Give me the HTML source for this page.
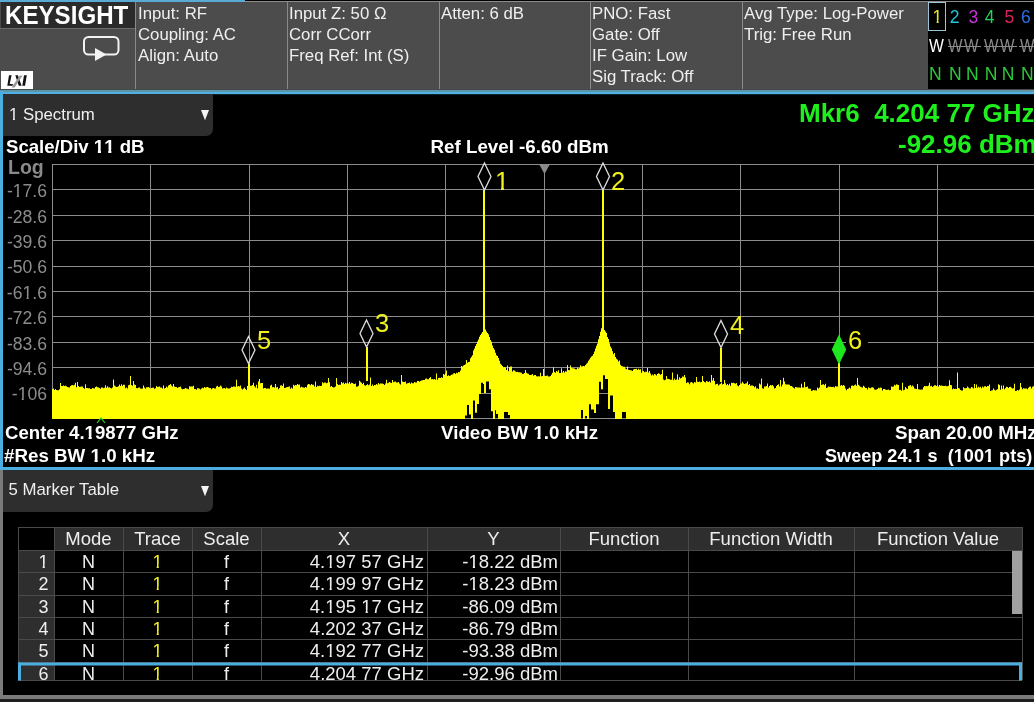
<!DOCTYPE html>
<html><head><meta charset="utf-8">
<style>
*{margin:0;padding:0;box-sizing:border-box}
html,body{width:1034px;height:702px;overflow:hidden;background:#000;font-family:"Liberation Sans",sans-serif}
.abs{position:absolute;white-space:pre}
.hd{color:#efefef;font-size:16.8px;line-height:21px}
#root{position:absolute;left:0;top:0;width:1034px;height:702px;will-change:transform}
.b{font-weight:bold}
.o{display:inline-block;line-height:1.117em;height:1.117em;margin:-0.5em 0;clip-path:polygon(0 0,100% 0,100% 0.70em,0.35em 0.70em,0.35em 100%,0.235em 100%,0.235em 0.70em,0 0.70em)}
.ob{display:inline-block;line-height:1.117em;height:1.117em;margin:-0.5em 0;clip-path:polygon(0 0,100% 0,100% 0.70em,0.385em 0.70em,0.385em 100%,0.215em 100%,0.215em 0.70em,0 0.70em)}
</style></head><body><div id="root">
<div class="abs" style="left:0;top:1px;width:1034px;height:89px;background:#4c4c4c;border-top:1px solid #8c8c8c"></div>
<div class="abs" style="left:0;top:0;width:245px;height:1.7px;background:#5aaad4"></div>
<div class="abs" style="left:1px;top:2px;width:134px;height:26px;background:#2b2b2b"></div>
<div class="abs" style="left:0;top:28px;width:135px;height:1px;background:#6a6a6a"></div>
<div class="abs b" style="left:5px;top:0px;font-size:25px;line-height:30px;color:#fff;transform:scaleX(0.965);transform-origin:0 0">KEYSIGHT</div>
<svg class="abs" style="left:80px;top:33px" width="42" height="32">
 <rect x="4" y="4" width="34.5" height="17.5" rx="4.5" ry="4.5" fill="none" stroke="#f2f2f2" stroke-width="2"/>
 <path d="M15 15 L26.5 21.5 L15 28 Z" fill="#f2f2f2"/>
</svg>
<div class="abs" style="left:1px;top:71px;width:32px;height:19px;background:#fff"></div>
<svg class="abs" style="left:0;top:70px" width="36" height="22"><path d="M9 5.2 L11.6 5.2 L9.7 14 L12.9 14 L12.6 15.8 L7.3 15.8 Z" fill="#111"/><path d="M15.3 5.2 L17.9 5.2 L21.6 15.7 L18.8 15.7 Z" fill="#111"/><path d="M19.8 5.5 L22.6 5.5 L14.6 17.6 L11.5 17.6 Z" fill="#999"/><path d="M24 5.2 L26.8 5.2 L25 15.7 L22.3 15.7 Z" fill="#111"/></svg>
<div class="abs" style="left:135px;top:1px;width:1px;height:89px;background:#8a8a8a"></div>
<div class="abs" style="left:287px;top:1px;width:1px;height:89px;background:#8a8a8a"></div>
<div class="abs" style="left:439px;top:1px;width:1px;height:89px;background:#8a8a8a"></div>
<div class="abs" style="left:590px;top:1px;width:1px;height:89px;background:#8a8a8a"></div>
<div class="abs" style="left:742px;top:1px;width:1px;height:89px;background:#8a8a8a"></div>
<div class="abs hd" style="left:138px;top:3px">Input: RF
Coupling: AC
Align: Auto</div>
<div class="abs hd" style="left:289px;top:3px">Input Z: 50 Ω
Corr CCorr
Freq Ref: Int (S)</div>
<div class="abs hd" style="left:441px;top:3px">Atten: 6 dB</div>
<div class="abs hd" style="left:592px;top:3px">PNO: Fast
Gate: Off
IF Gain: Low
Sig Track: Off</div>
<div class="abs hd" style="left:744px;top:3px">Avg Type: Log-Power
Trig: Free Run</div>
<div class="abs" style="left:928px;top:2px;width:106px;height:88px;background:#000"></div>
<div class="abs" style="left:928px;top:2px;width:18px;height:29px;border:1px solid #9cc4d8"></div>
<div class="abs" style="left:932.5px;top:5px;font-size:17.5px;line-height:24px;color:#e8e82a"><span class="o">1</span></div>
<div class="abs" style="left:949.8px;top:5px;font-size:17.5px;line-height:24px;color:#1cc8d8">2</div>
<div class="abs" style="left:968.5px;top:5px;font-size:17.5px;line-height:24px;color:#c832d8">3</div>
<div class="abs" style="left:984.8px;top:5px;font-size:17.5px;line-height:24px;color:#22d45a">4</div>
<div class="abs" style="left:1004.4px;top:5px;font-size:17.5px;line-height:24px;color:#d8245a">5</div>
<div class="abs" style="left:1021px;top:5px;font-size:17.5px;line-height:24px;color:#2a6ee0">6</div>
<div class="abs" style="left:929px;top:34px;font-size:17.5px;line-height:24px;color:#fff;transform:scaleX(0.9);transform-origin:0 0">W</div>
<div class="abs" style="left:948px;top:34px;font-size:17.5px;line-height:24px;color:#8a8a8a;transform:scaleX(0.88);transform-origin:0 0">W</div>
<div class="abs" style="left:963.5px;top:34px;font-size:17.5px;line-height:24px;color:#8a8a8a;transform:scaleX(0.88);transform-origin:0 0">W</div>
<div class="abs" style="left:984px;top:34px;font-size:17.5px;line-height:24px;color:#8a8a8a;transform:scaleX(0.88);transform-origin:0 0">W</div>
<div class="abs" style="left:1000px;top:34px;font-size:17.5px;line-height:24px;color:#8a8a8a;transform:scaleX(0.88);transform-origin:0 0">W</div>
<div class="abs" style="left:1020px;top:34px;font-size:17.5px;line-height:24px;color:#8a8a8a;transform:scaleX(0.88);transform-origin:0 0">W</div>
<div class="abs" style="left:947.5px;top:46px;width:33.5px;height:1px;background:#8a8a8a"></div>
<div class="abs" style="left:983.5px;top:46px;width:33.5px;height:1px;background:#8a8a8a"></div>
<div class="abs" style="left:1019px;top:46px;width:15px;height:1px;background:#8a8a8a"></div>
<div class="abs" style="left:929px;top:62px;font-size:17.5px;line-height:24px;color:#2ec83c">N</div>
<div class="abs" style="left:949px;top:62px;font-size:17.5px;line-height:24px;color:#2ec83c">N</div>
<div class="abs" style="left:966px;top:62px;font-size:17.5px;line-height:24px;color:#2ec83c">N</div>
<div class="abs" style="left:984.7px;top:62px;font-size:17.5px;line-height:24px;color:#2ec83c">N</div>
<div class="abs" style="left:1001.8px;top:62px;font-size:17.5px;line-height:24px;color:#2ec83c">N</div>
<div class="abs" style="left:1021px;top:62px;font-size:17.5px;line-height:24px;color:#2ec83c">N</div>
<div class="abs" style="left:0;top:89px;width:1034px;height:6px;background:linear-gradient(to bottom,#434a4e 0px,#434a4e 1px,#5e96a8 1px,#5e96a8 2.6px,#50b0e4 2.6px,#50b0e4 4.8px,#0c2630 4.8px,#0c2630 6px)"></div>
<div class="abs" style="left:0;top:91px;width:3px;height:379px;background:#4aaee0"></div>
<div class="abs" style="left:0;top:467px;width:1034px;height:3px;background:#4aaee0"></div>
<div class="abs" style="left:3px;top:94px;width:210px;height:41.6px;background:#2e2e2e;border-bottom-right-radius:7px"></div>
<div class="abs" style="left:9px;top:104.5px;font-size:16.8px;line-height:20px;color:#efefef"><span class="o">1</span> Spectrum</div>
<svg class="abs" style="left:200px;top:109px" width="10" height="12"><path d="M1 1 L9 1 L5 11.2 Z" fill="#f4f4f4"/></svg>
<div class="abs b" style="left:6px;top:136px;font-size:18.6px;line-height:22px;color:#fff">Scale/Div <span class="ob">1</span><span class="ob">1</span> dB</div>
<div class="abs b" style="left:430.5px;top:136px;font-size:18.75px;line-height:22px;color:#fff">Ref Level -6.60 dBm</div>
<div class="abs b" style="left:799px;top:98px;font-size:26px;line-height:30px;color:#1ef01e">Mkr6  4.204 77 GHz</div>
<div class="abs b" style="left:898px;top:129px;font-size:26px;line-height:30px;color:#1ef01e">-92.96 dBm</div>
<div class="abs b" style="left:8px;top:156px;font-size:19.5px;line-height:22px;color:#8a8a8a">Log</div>
<div class="abs" style="right:987px;top:180.2px;font-size:17.6px;line-height:22px;color:#8c8c8c">-<span class="o">1</span>7.6</div>
<div class="abs" style="right:987px;top:205.6px;font-size:17.6px;line-height:22px;color:#8c8c8c">-28.6</div>
<div class="abs" style="right:987px;top:231.0px;font-size:17.6px;line-height:22px;color:#8c8c8c">-39.6</div>
<div class="abs" style="right:987px;top:256.4px;font-size:17.6px;line-height:22px;color:#8c8c8c">-50.6</div>
<div class="abs" style="right:987px;top:281.8px;font-size:17.6px;line-height:22px;color:#8c8c8c">-6<span class="o">1</span>.6</div>
<div class="abs" style="right:987px;top:307.2px;font-size:17.6px;line-height:22px;color:#8c8c8c">-72.6</div>
<div class="abs" style="right:987px;top:332.6px;font-size:17.6px;line-height:22px;color:#8c8c8c">-83.6</div>
<div class="abs" style="right:987px;top:358.0px;font-size:17.6px;line-height:22px;color:#8c8c8c">-94.6</div>
<div class="abs" style="right:987px;top:383.4px;font-size:17.6px;line-height:22px;color:#8c8c8c">-<span class="o">1</span>06</div>
<svg class="abs" style="left:0;top:0" width="1034" height="702"><rect x="52" y="164" width="1" height="255" fill="#8c8c8c"/><rect x="150" y="164" width="1" height="255" fill="#8c8c8c"/><rect x="249" y="164" width="1" height="255" fill="#8c8c8c"/><rect x="347" y="164" width="1" height="255" fill="#8c8c8c"/><rect x="445" y="164" width="1" height="255" fill="#8c8c8c"/><rect x="544" y="164" width="1" height="255" fill="#8c8c8c"/><rect x="642" y="164" width="1" height="255" fill="#8c8c8c"/><rect x="740" y="164" width="1" height="255" fill="#8c8c8c"/><rect x="839" y="164" width="1" height="255" fill="#8c8c8c"/><rect x="937" y="164" width="1" height="255" fill="#8c8c8c"/><rect x="52" y="164" width="982" height="1" fill="#8c8c8c"/><rect x="52" y="189" width="982" height="1" fill="#8c8c8c"/><rect x="52" y="215" width="982" height="1" fill="#8c8c8c"/><rect x="52" y="240" width="982" height="1" fill="#8c8c8c"/><rect x="52" y="266" width="982" height="1" fill="#8c8c8c"/><rect x="52" y="291" width="982" height="1" fill="#8c8c8c"/><rect x="52" y="316" width="982" height="1" fill="#8c8c8c"/><rect x="52" y="342" width="982" height="1" fill="#8c8c8c"/><rect x="52" y="367" width="982" height="1" fill="#8c8c8c"/><rect x="52" y="393" width="982" height="1" fill="#8c8c8c"/><rect x="52" y="418" width="982" height="1" fill="#8c8c8c"/><path d="M539.5 165 L549.5 165 L544.5 174 Z" fill="#8a8a8a"/><path d="M52 388.9 L52 388.9 L53 388.9 L53 388.6 L54 388.6 L54 390.1 L55 390.1 L55 388.9 L56 388.9 L56 389.9 L57 389.9 L57 390.2 L58 390.2 L58 390.3 L59 390.3 L59 389.2 L60 389.2 L60 383.0 L61 383.0 L61 386.1 L62 386.1 L62 386.1 L63 386.1 L63 385.4 L64 385.4 L64 386.1 L65 386.1 L65 385.8 L66 385.8 L66 386.3 L67 386.3 L67 386.9 L68 386.9 L68 387.3 L69 387.3 L69 387.6 L70 387.6 L70 385.9 L71 385.9 L71 385.3 L72 385.3 L72 384.9 L73 384.9 L73 385.4 L74 385.4 L74 384.8 L75 384.8 L75 382.8 L76 382.8 L76 387.3 L77 387.3 L77 382.0 L78 382.0 L78 386.1 L79 386.1 L79 387.1 L80 387.1 L80 386.7 L81 386.7 L81 386.4 L82 386.4 L82 386.4 L83 386.4 L83 388.0 L84 388.0 L84 388.8 L85 388.8 L85 384.3 L86 384.3 L86 387.9 L87 387.9 L87 388.0 L88 388.0 L88 388.3 L89 388.3 L89 388.3 L90 388.3 L90 389.0 L91 389.0 L91 388.9 L92 388.9 L92 388.0 L93 388.0 L93 388.3 L94 388.3 L94 388.5 L95 388.5 L95 387.1 L96 387.1 L96 386.6 L97 386.6 L97 387.2 L98 387.2 L98 387.6 L99 387.6 L99 387.9 L100 387.9 L100 388.7 L101 388.7 L101 387.4 L102 387.4 L102 387.5 L103 387.5 L103 388.2 L104 388.2 L104 387.8 L105 387.8 L105 385.3 L106 385.3 L106 387.8 L107 387.8 L107 386.2 L108 386.2 L108 387.4 L109 387.4 L109 387.2 L110 387.2 L110 387.9 L111 387.9 L111 388.5 L112 388.5 L112 387.5 L113 387.5 L113 379.4 L114 379.4 L114 385.4 L115 385.4 L115 386.5 L116 386.5 L116 387.0 L117 387.0 L117 386.7 L118 386.7 L118 386.3 L119 386.3 L119 384.6 L120 384.6 L120 385.9 L121 385.9 L121 384.2 L122 384.2 L122 385.7 L123 385.7 L123 384.7 L124 384.7 L124 384.7 L125 384.7 L125 388.3 L126 388.3 L126 387.6 L127 387.6 L127 388.4 L128 388.4 L128 385.2 L129 385.2 L129 384.8 L130 384.8 L130 376.0 L131 376.0 L131 384.9 L132 384.9 L132 385.7 L133 385.7 L133 381.0 L134 381.0 L134 384.6 L135 384.6 L135 384.9 L136 384.9 L136 387.9 L137 387.9 L137 388.3 L138 388.3 L138 387.6 L139 387.6 L139 387.5 L140 387.5 L140 388.4 L141 388.4 L141 388.7 L142 388.7 L142 388.6 L143 388.6 L143 385.4 L144 385.4 L144 387.5 L145 387.5 L145 388.7 L146 388.7 L146 387.2 L147 387.2 L147 387.3 L148 387.3 L148 386.9 L149 386.9 L149 387.8 L150 387.8 L150 388.6 L151 388.6 L151 387.9 L152 387.9 L152 387.7 L153 387.7 L153 387.6 L154 387.6 L154 388.8 L155 388.8 L155 388.3 L156 388.3 L156 386.1 L157 386.1 L157 386.9 L158 386.9 L158 386.7 L159 386.7 L159 386.5 L160 386.5 L160 387.5 L161 387.5 L161 387.6 L162 387.6 L162 388.5 L163 388.5 L163 385.4 L164 385.4 L164 388.5 L165 388.5 L165 388.0 L166 388.0 L166 386.5 L167 386.5 L167 387.5 L168 387.5 L168 385.4 L169 385.4 L169 385.0 L170 385.0 L170 384.1 L171 384.1 L171 385.5 L172 385.5 L172 386.4 L173 386.4 L173 384.1 L174 384.1 L174 386.5 L175 386.5 L175 386.9 L176 386.9 L176 386.9 L177 386.9 L177 387.9 L178 387.9 L178 387.3 L179 387.3 L179 387.0 L180 387.0 L180 386.6 L181 386.6 L181 388.6 L182 388.6 L182 389.2 L183 389.2 L183 389.1 L184 389.1 L184 388.8 L185 388.8 L185 388.0 L186 388.0 L186 388.4 L187 388.4 L187 388.7 L188 388.7 L188 389.2 L189 389.2 L189 386.2 L190 386.2 L190 386.4 L191 386.4 L191 386.5 L192 386.5 L192 386.5 L193 386.5 L193 385.7 L194 385.7 L194 389.1 L195 389.1 L195 388.9 L196 388.9 L196 389.7 L197 389.7 L197 388.2 L198 388.2 L198 388.2 L199 388.2 L199 388.8 L200 388.8 L200 389.4 L201 389.4 L201 388.4 L202 388.4 L202 387.7 L203 387.7 L203 388.2 L204 388.2 L204 387.0 L205 387.0 L205 387.8 L206 387.8 L206 387.2 L207 387.2 L207 387.0 L208 387.0 L208 387.5 L209 387.5 L209 388.1 L210 388.1 L210 388.0 L211 388.0 L211 389.3 L212 389.3 L212 388.3 L213 388.3 L213 388.1 L214 388.1 L214 388.6 L215 388.6 L215 388.4 L216 388.4 L216 386.4 L217 386.4 L217 385.8 L218 385.8 L218 387.1 L219 387.1 L219 386.8 L220 386.8 L220 385.6 L221 385.6 L221 386.5 L222 386.5 L222 388.5 L223 388.5 L223 388.3 L224 388.3 L224 388.1 L225 388.1 L225 388.8 L226 388.8 L226 387.5 L227 387.5 L227 388.3 L228 388.3 L228 388.5 L229 388.5 L229 388.5 L230 388.5 L230 388.0 L231 388.0 L231 386.8 L232 386.8 L232 387.0 L233 387.0 L233 386.4 L234 386.4 L234 386.5 L235 386.5 L235 386.8 L236 386.8 L236 379.7 L237 379.7 L237 386.6 L238 386.6 L238 386.1 L239 386.1 L239 386.5 L240 386.5 L240 385.4 L241 385.4 L241 388.4 L242 388.4 L242 389.6 L243 389.6 L243 388.4 L244 388.4 L244 387.4 L245 387.4 L245 389.0 L246 389.0 L246 389.9 L247 389.9 L247 386.0 L248 386.0 L248 386.0 L249 386.0 L249 385.3 L250 385.3 L250 385.8 L251 385.8 L251 385.8 L252 385.8 L252 385.1 L253 385.1 L253 382.8 L254 382.8 L254 386.3 L255 386.3 L255 387.5 L256 387.5 L256 384.7 L257 384.7 L257 388.3 L258 388.3 L258 381.4 L259 381.4 L259 378.9 L260 378.9 L260 383.3 L261 383.3 L261 383.1 L262 383.1 L262 383.0 L263 383.0 L263 388.6 L264 388.6 L264 388.1 L265 388.1 L265 387.9 L266 387.9 L266 388.8 L267 388.8 L267 388.6 L268 388.6 L268 388.4 L269 388.4 L269 388.8 L270 388.8 L270 385.6 L271 385.6 L271 384.8 L272 384.8 L272 387.2 L273 387.2 L273 387.0 L274 387.0 L274 387.6 L275 387.6 L275 384.1 L276 384.1 L276 387.6 L277 387.6 L277 387.0 L278 387.0 L278 389.3 L279 389.3 L279 388.1 L280 388.1 L280 385.5 L281 385.5 L281 385.3 L282 385.3 L282 385.9 L283 385.9 L283 383.6 L284 383.6 L284 388.1 L285 388.1 L285 387.7 L286 387.7 L286 387.3 L287 387.3 L287 387.0 L288 387.0 L288 386.7 L289 386.7 L289 386.4 L290 386.4 L290 388.8 L291 388.8 L291 387.5 L292 387.5 L292 388.6 L293 388.6 L293 384.7 L294 384.7 L294 385.7 L295 385.7 L295 385.0 L296 385.0 L296 385.3 L297 385.3 L297 383.9 L298 383.9 L298 384.7 L299 384.7 L299 384.4 L300 384.4 L300 387.6 L301 387.6 L301 386.7 L302 386.7 L302 387.2 L303 387.2 L303 387.6 L304 387.6 L304 387.8 L305 387.8 L305 387.0 L306 387.0 L306 387.6 L307 387.6 L307 384.8 L308 384.8 L308 384.0 L309 384.0 L309 384.2 L310 384.2 L310 385.2 L311 385.2 L311 384.0 L312 384.0 L312 384.7 L313 384.7 L313 384.7 L314 384.7 L314 386.6 L315 386.6 L315 381.5 L316 381.5 L316 387.0 L317 387.0 L317 385.8 L318 385.8 L318 386.3 L319 386.3 L319 385.7 L320 385.7 L320 385.9 L321 385.9 L321 385.7 L322 385.7 L322 382.3 L323 382.3 L323 383.3 L324 383.3 L324 382.4 L325 382.4 L325 382.5 L326 382.5 L326 383.3 L327 383.3 L327 382.7 L328 382.7 L328 378.0 L329 378.0 L329 382.2 L330 382.2 L330 386.8 L331 386.8 L331 385.9 L332 385.9 L332 387.0 L333 387.0 L333 387.4 L334 387.4 L334 387.2 L335 387.2 L335 386.6 L336 386.6 L336 377.9 L337 377.9 L337 384.0 L338 384.0 L338 385.1 L339 385.1 L339 384.7 L340 384.7 L340 384.8 L341 384.8 L341 382.0 L342 382.0 L342 383.3 L343 383.3 L343 382.6 L344 382.6 L344 384.1 L345 384.1 L345 382.8 L346 382.8 L346 383.5 L347 383.5 L347 382.7 L348 382.7 L348 383.6 L349 383.6 L349 382.1 L350 382.1 L350 383.7 L351 383.7 L351 382.7 L352 382.7 L352 383.1 L353 383.1 L353 383.7 L354 383.7 L354 384.0 L355 384.0 L355 383.4 L356 383.4 L356 386.7 L357 386.7 L357 386.4 L358 386.4 L358 385.8 L359 385.8 L359 380.7 L360 380.7 L360 381.8 L361 381.8 L361 382.8 L362 382.8 L362 383.9 L363 383.9 L363 382.7 L364 382.7 L364 385.3 L365 385.3 L365 385.7 L366 385.7 L366 385.1 L367 385.1 L367 384.2 L368 384.2 L368 385.2 L369 385.2 L369 384.5 L370 384.5 L370 377.5 L371 377.5 L371 385.9 L372 385.9 L372 384.6 L373 384.6 L373 385.9 L374 385.9 L374 385.1 L375 385.1 L375 385.1 L376 385.1 L376 384.1 L377 384.1 L377 384.8 L378 384.8 L378 383.0 L379 383.0 L379 384.2 L380 384.2 L380 383.4 L381 383.4 L381 383.5 L382 383.5 L382 383.6 L383 383.6 L383 383.9 L384 383.9 L384 385.0 L385 385.0 L385 383.6 L386 383.6 L386 379.7 L387 379.7 L387 383.2 L388 383.2 L388 382.7 L389 382.7 L389 382.1 L390 382.1 L390 382.5 L391 382.5 L391 383.1 L392 383.1 L392 380.0 L393 380.0 L393 382.3 L394 382.3 L394 381.8 L395 381.8 L395 381.4 L396 381.4 L396 382.5 L397 382.5 L397 382.4 L398 382.4 L398 382.0 L399 382.0 L399 383.4 L400 383.4 L400 384.5 L401 384.5 L401 375.0 L402 375.0 L402 381.5 L403 381.5 L403 381.9 L404 381.9 L404 382.1 L405 382.1 L405 381.4 L406 381.4 L406 383.7 L407 383.7 L407 383.3 L408 383.3 L408 383.0 L409 383.0 L409 382.5 L410 382.5 L410 383.7 L411 383.7 L411 382.5 L412 382.5 L412 383.3 L413 383.3 L413 383.3 L414 383.3 L414 381.9 L415 381.9 L415 382.5 L416 382.5 L416 382.6 L417 382.6 L417 381.1 L418 381.1 L418 381.0 L419 381.0 L419 381.7 L420 381.7 L420 381.1 L421 381.1 L421 380.5 L422 380.5 L422 380.3 L423 380.3 L423 380.1 L424 380.1 L424 380.0 L425 380.0 L425 378.8 L426 378.8 L426 378.5 L427 378.5 L427 379.2 L428 379.2 L428 379.2 L429 379.2 L429 378.1 L430 378.1 L430 377.1 L431 377.1 L431 379.2 L432 379.2 L432 379.0 L433 379.0 L433 379.6 L434 379.6 L434 379.1 L435 379.1 L435 379.7 L436 379.7 L436 373.6 L437 373.6 L437 379.8 L438 379.8 L438 377.9 L439 377.9 L439 377.8 L440 377.8 L440 378.1 L441 378.1 L441 377.3 L442 377.3 L442 377.7 L443 377.7 L443 374.1 L444 374.1 L444 374.8 L445 374.8 L445 373.2 L446 373.2 L446 370.4 L447 370.4 L447 376.1 L448 376.1 L448 375.3 L449 375.3 L449 375.9 L450 375.9 L450 375.4 L451 375.4 L451 374.7 L452 374.7 L452 374.5 L453 374.5 L453 373.4 L454 373.4 L454 372.9 L455 372.9 L455 373.9 L456 373.9 L456 372.7 L457 372.7 L457 373.2 L458 373.2 L458 371.9 L459 371.9 L459 372.3 L460 372.3 L460 370.6 L461 370.6 L461 366.0 L462 366.0 L462 366.6 L463 366.6 L463 365.4 L464 365.4 L464 365.0 L465 365.0 L465 364.3 L466 364.3 L466 360.1 L467 360.1 L467 362.8 L468 362.8 L468 362.0 L469 362.0 L469 361.7 L470 361.7 L470 358.2 L471 358.2 L471 356.7 L472 356.7 L472 355.2 L473 355.2 L473 350.5 L474 350.5 L474 348.4 L475 348.4 L475 345.9 L476 345.9 L476 343.9 L477 343.9 L477 341.4 L478 341.4 L478 339.6 L479 339.6 L479 336.7 L480 336.7 L480 335.0 L481 335.0 L481 333.4 L482 333.4 L482 332.1 L483 332.1 L483 331.0 L484 331.0 L484 330.7 L485 330.7 L485 329.5 L486 329.5 L486 331.4 L487 331.4 L487 332.9 L488 332.9 L488 334.2 L489 334.2 L489 336.9 L490 336.9 L490 339.9 L491 339.9 L491 341.8 L492 341.8 L492 345.4 L493 345.4 L493 347.9 L494 347.9 L494 349.8 L495 349.8 L495 352.8 L496 352.8 L496 355.3 L497 355.3 L497 355.9 L498 355.9 L498 358.1 L499 358.1 L499 360.7 L500 360.7 L500 363.7 L501 363.7 L501 364.8 L502 364.8 L502 365.9 L503 365.9 L503 367.3 L504 367.3 L504 367.0 L505 367.0 L505 367.4 L506 367.4 L506 369.9 L507 369.9 L507 365.5 L508 365.5 L508 371.3 L509 371.3 L509 367.0 L510 367.0 L510 366.4 L511 366.4 L511 366.6 L512 366.6 L512 371.6 L513 371.6 L513 370.3 L514 370.3 L514 370.6 L515 370.6 L515 371.4 L516 371.4 L516 372.1 L517 372.1 L517 371.8 L518 371.8 L518 372.2 L519 372.2 L519 372.2 L520 372.2 L520 372.5 L521 372.5 L521 372.8 L522 372.8 L522 373.9 L523 373.9 L523 373.7 L524 373.7 L524 373.1 L525 373.1 L525 370.1 L526 370.1 L526 372.7 L527 372.7 L527 373.6 L528 373.6 L528 373.7 L529 373.7 L529 375.1 L530 375.1 L530 374.9 L531 374.9 L531 374.8 L532 374.8 L532 373.9 L533 373.9 L533 375.8 L534 375.8 L534 375.1 L535 375.1 L535 375.0 L536 375.0 L536 376.2 L537 376.2 L537 376.6 L538 376.6 L538 376.2 L539 376.2 L539 376.5 L540 376.5 L540 372.7 L541 372.7 L541 376.3 L542 376.3 L542 375.9 L543 375.9 L543 368.9 L544 368.9 L544 375.8 L545 375.8 L545 376.0 L546 376.0 L546 375.8 L547 375.8 L547 375.5 L548 375.5 L548 376.4 L549 376.4 L549 376.6 L550 376.6 L550 376.1 L551 376.1 L551 374.6 L552 374.6 L552 372.7 L553 372.7 L553 367.3 L554 367.3 L554 371.9 L555 371.9 L555 372.8 L556 372.8 L556 370.9 L557 370.9 L557 371.8 L558 371.8 L558 370.3 L559 370.3 L559 372.9 L560 372.9 L560 373.1 L561 373.1 L561 368.3 L562 368.3 L562 372.5 L563 372.5 L563 370.9 L564 370.9 L564 372.6 L565 372.6 L565 371.3 L566 371.3 L566 371.6 L567 371.6 L567 364.9 L568 364.9 L568 370.1 L569 370.1 L569 370.2 L570 370.2 L570 365.4 L571 365.4 L571 368.0 L572 368.0 L572 368.2 L573 368.2 L573 368.2 L574 368.2 L574 368.4 L575 368.4 L575 369.3 L576 369.3 L576 369.3 L577 369.3 L577 367.7 L578 367.7 L578 368.5 L579 368.5 L579 368.1 L580 368.1 L580 365.3 L581 365.3 L581 366.6 L582 366.6 L582 366.2 L583 366.2 L583 366.0 L584 366.0 L584 366.2 L585 366.2 L585 365.1 L586 365.1 L586 363.7 L587 363.7 L587 362.7 L588 362.7 L588 360.8 L589 360.8 L589 359.5 L590 359.5 L590 357.7 L591 357.7 L591 356.4 L592 356.4 L592 355.7 L593 355.7 L593 354.0 L594 354.0 L594 351.5 L595 351.5 L595 348.4 L596 348.4 L596 345.8 L597 345.8 L597 343.4 L598 343.4 L598 339.3 L599 339.3 L599 336.1 L600 336.1 L600 331.7 L601 331.7 L601 328.2 L602 328.2 L602 330.0 L603 330.0 L603 329.9 L604 329.9 L604 330.0 L605 330.0 L605 331.5 L606 331.5 L606 333.0 L607 333.0 L607 336.9 L608 336.9 L608 338.9 L609 338.9 L609 343.2 L610 343.2 L610 346.5 L611 346.5 L611 348.2 L612 348.2 L612 351.2 L613 351.2 L613 354.2 L614 354.2 L614 353.1 L615 353.1 L615 357.0 L616 357.0 L616 358.8 L617 358.8 L617 359.8 L618 359.8 L618 361.5 L619 361.5 L619 360.5 L620 360.5 L620 364.7 L621 364.7 L621 365.9 L622 365.9 L622 366.2 L623 366.2 L623 366.7 L624 366.7 L624 366.8 L625 366.8 L625 368.4 L626 368.4 L626 369.2 L627 369.2 L627 366.6 L628 366.6 L628 369.8 L629 369.8 L629 370.1 L630 370.1 L630 370.2 L631 370.2 L631 370.4 L632 370.4 L632 371.0 L633 371.0 L633 369.5 L634 369.5 L634 369.0 L635 369.0 L635 369.0 L636 369.0 L636 368.8 L637 368.8 L637 370.1 L638 370.1 L638 368.8 L639 368.8 L639 369.7 L640 369.7 L640 369.3 L641 369.3 L641 372.8 L642 372.8 L642 371.3 L643 371.3 L643 371.1 L644 371.1 L644 372.3 L645 372.3 L645 371.8 L646 371.8 L646 371.8 L647 371.8 L647 368.0 L648 368.0 L648 372.4 L649 372.4 L649 370.9 L650 370.9 L650 373.6 L651 373.6 L651 375.5 L652 375.5 L652 374.4 L653 374.4 L653 375.4 L654 375.4 L654 373.9 L655 373.9 L655 374.4 L656 374.4 L656 375.5 L657 375.5 L657 373.9 L658 373.9 L658 373.2 L659 373.2 L659 373.7 L660 373.7 L660 374.8 L661 374.8 L661 374.1 L662 374.1 L662 369.8 L663 369.8 L663 379.4 L664 379.4 L664 380.2 L665 380.2 L665 379.7 L666 379.7 L666 376.0 L667 376.0 L667 378.8 L668 378.8 L668 379.1 L669 379.1 L669 379.3 L670 379.3 L670 379.8 L671 379.8 L671 379.7 L672 379.7 L672 372.4 L673 372.4 L673 380.3 L674 380.3 L674 378.5 L675 378.5 L675 379.9 L676 379.9 L676 379.6 L677 379.6 L677 374.2 L678 374.2 L678 379.8 L679 379.8 L679 377.3 L680 377.3 L680 378.4 L681 378.4 L681 377.9 L682 377.9 L682 376.4 L683 376.4 L683 376.8 L684 376.8 L684 375.1 L685 375.1 L685 377.6 L686 377.6 L686 382.9 L687 382.9 L687 382.2 L688 382.2 L688 382.6 L689 382.6 L689 384.2 L690 384.2 L690 382.5 L691 382.5 L691 382.1 L692 382.1 L692 382.8 L693 382.8 L693 383.5 L694 383.5 L694 382.1 L695 382.1 L695 382.4 L696 382.4 L696 376.9 L697 376.9 L697 381.8 L698 381.8 L698 382.1 L699 382.1 L699 381.4 L700 381.4 L700 382.2 L701 382.2 L701 382.0 L702 382.0 L702 376.0 L703 376.0 L703 381.1 L704 381.1 L704 382.1 L705 382.1 L705 382.6 L706 382.6 L706 381.1 L707 381.1 L707 381.6 L708 381.6 L708 381.9 L709 381.9 L709 381.2 L710 381.2 L710 382.4 L711 382.4 L711 375.0 L712 375.0 L712 380.6 L713 380.6 L713 378.0 L714 378.0 L714 381.1 L715 381.1 L715 384.4 L716 384.4 L716 384.0 L717 384.0 L717 383.7 L718 383.7 L718 385.4 L719 385.4 L719 384.4 L720 384.4 L720 383.8 L721 383.8 L721 382.4 L722 382.4 L722 384.6 L723 384.6 L723 384.1 L724 384.1 L724 380.0 L725 380.0 L725 383.3 L726 383.3 L726 385.0 L727 385.0 L727 384.1 L728 384.1 L728 385.2 L729 385.2 L729 383.7 L730 383.7 L730 385.8 L731 385.8 L731 382.8 L732 382.8 L732 383.1 L733 383.1 L733 382.8 L734 382.8 L734 383.3 L735 383.3 L735 383.8 L736 383.8 L736 383.1 L737 383.1 L737 385.5 L738 385.5 L738 386.3 L739 386.3 L739 385.0 L740 385.0 L740 383.5 L741 383.5 L741 383.6 L742 383.6 L742 381.7 L743 381.7 L743 383.2 L744 383.2 L744 384.0 L745 384.0 L745 383.5 L746 383.5 L746 383.3 L747 383.3 L747 381.4 L748 381.4 L748 385.0 L749 385.0 L749 384.1 L750 384.1 L750 385.8 L751 385.8 L751 385.6 L752 385.6 L752 385.4 L753 385.4 L753 385.9 L754 385.9 L754 387.2 L755 387.2 L755 386.3 L756 386.3 L756 388.5 L757 388.5 L757 388.3 L758 388.3 L758 388.9 L759 388.9 L759 383.6 L760 383.6 L760 384.5 L761 384.5 L761 378.6 L762 378.6 L762 388.2 L763 388.2 L763 388.7 L764 388.7 L764 386.5 L765 386.5 L765 386.4 L766 386.4 L766 386.1 L767 386.1 L767 383.6 L768 383.6 L768 387.6 L769 387.6 L769 386.0 L770 386.0 L770 385.0 L771 385.0 L771 385.5 L772 385.5 L772 385.1 L773 385.1 L773 386.3 L774 386.3 L774 388.4 L775 388.4 L775 387.9 L776 387.9 L776 385.9 L777 385.9 L777 385.1 L778 385.1 L778 384.3 L779 384.3 L779 386.5 L780 386.5 L780 379.9 L781 379.9 L781 386.4 L782 386.4 L782 384.6 L783 384.6 L783 377.8 L784 377.8 L784 381.4 L785 381.4 L785 384.2 L786 384.2 L786 384.4 L787 384.4 L787 384.6 L788 384.6 L788 384.4 L789 384.4 L789 384.7 L790 384.7 L790 385.9 L791 385.9 L791 386.0 L792 386.0 L792 386.8 L793 386.8 L793 387.8 L794 387.8 L794 388.5 L795 388.5 L795 387.0 L796 387.0 L796 387.3 L797 387.3 L797 387.5 L798 387.5 L798 387.6 L799 387.6 L799 387.4 L800 387.4 L800 387.8 L801 387.8 L801 383.7 L802 383.7 L802 387.4 L803 387.4 L803 387.6 L804 387.6 L804 381.9 L805 381.9 L805 387.2 L806 387.2 L806 387.0 L807 387.0 L807 386.5 L808 386.5 L808 388.4 L809 388.4 L809 388.8 L810 388.8 L810 388.8 L811 388.8 L811 390.9 L812 390.9 L812 390.5 L813 390.5 L813 389.9 L814 389.9 L814 390.3 L815 390.3 L815 390.3 L816 390.3 L816 390.6 L817 390.6 L817 387.5 L818 387.5 L818 388.4 L819 388.4 L819 387.5 L820 387.5 L820 380.0 L821 380.0 L821 385.1 L822 385.1 L822 384.4 L823 384.4 L823 384.3 L824 384.3 L824 385.3 L825 385.3 L825 383.8 L826 383.8 L826 388.1 L827 388.1 L827 387.5 L828 387.5 L828 386.5 L829 386.5 L829 386.7 L830 386.7 L830 386.8 L831 386.8 L831 386.9 L832 386.9 L832 387.1 L833 387.1 L833 386.8 L834 386.8 L834 387.4 L835 387.4 L835 385.9 L836 385.9 L836 386.4 L837 386.4 L837 386.4 L838 386.4 L838 386.4 L839 386.4 L839 386.4 L840 386.4 L840 385.7 L841 385.7 L841 384.9 L842 384.9 L842 385.8 L843 385.8 L843 384.9 L844 384.9 L844 385.7 L845 385.7 L845 388.4 L846 388.4 L846 390.2 L847 390.2 L847 388.9 L848 388.9 L848 388.5 L849 388.5 L849 387.6 L850 387.6 L850 388.5 L851 388.5 L851 385.8 L852 385.8 L852 385.4 L853 385.4 L853 386.0 L854 386.0 L854 385.3 L855 385.3 L855 384.4 L856 384.4 L856 385.8 L857 385.8 L857 378.0 L858 378.0 L858 384.8 L859 384.8 L859 385.8 L860 385.8 L860 386.8 L861 386.8 L861 387.2 L862 387.2 L862 387.4 L863 387.4 L863 385.8 L864 385.8 L864 386.7 L865 386.7 L865 387.9 L866 387.9 L866 388.1 L867 388.1 L867 389.4 L868 389.4 L868 387.2 L869 387.2 L869 388.1 L870 388.1 L870 388.3 L871 388.3 L871 387.6 L872 387.6 L872 387.3 L873 387.3 L873 387.7 L874 387.7 L874 389.4 L875 389.4 L875 389.7 L876 389.7 L876 389.4 L877 389.4 L877 389.1 L878 389.1 L878 387.7 L879 387.7 L879 388.3 L880 388.3 L880 387.4 L881 387.4 L881 387.9 L882 387.9 L882 390.5 L883 390.5 L883 389.0 L884 389.0 L884 389.1 L885 389.1 L885 389.6 L886 389.6 L886 390.1 L887 390.1 L887 389.7 L888 389.7 L888 389.6 L889 389.6 L889 390.2 L890 390.2 L890 389.9 L891 389.9 L891 386.6 L892 386.6 L892 386.7 L893 386.7 L893 386.4 L894 386.4 L894 384.7 L895 384.7 L895 385.6 L896 385.6 L896 384.3 L897 384.3 L897 384.8 L898 384.8 L898 385.1 L899 385.1 L899 390.1 L900 390.1 L900 389.7 L901 389.7 L901 390.8 L902 390.8 L902 382.7 L903 382.7 L903 390.3 L904 390.3 L904 389.8 L905 389.8 L905 387.1 L906 387.1 L906 388.3 L907 388.3 L907 389.1 L908 389.1 L908 386.1 L909 386.1 L909 385.4 L910 385.4 L910 384.9 L911 384.9 L911 386.6 L912 386.6 L912 385.5 L913 385.5 L913 386.4 L914 386.4 L914 388.5 L915 388.5 L915 388.7 L916 388.7 L916 389.1 L917 389.1 L917 384.0 L918 384.0 L918 389.2 L919 389.2 L919 389.5 L920 389.5 L920 389.7 L921 389.7 L921 389.6 L922 389.6 L922 389.4 L923 389.4 L923 387.2 L924 387.2 L924 386.1 L925 386.1 L925 386.2 L926 386.2 L926 386.0 L927 386.0 L927 386.3 L928 386.3 L928 385.5 L929 385.5 L929 382.8 L930 382.8 L930 386.3 L931 386.3 L931 385.8 L932 385.8 L932 387.0 L933 387.0 L933 386.2 L934 386.2 L934 385.3 L935 385.3 L935 385.3 L936 385.3 L936 386.1 L937 386.1 L937 385.2 L938 385.2 L938 386.4 L939 386.4 L939 385.0 L940 385.0 L940 385.7 L941 385.7 L941 385.4 L942 385.4 L942 385.8 L943 385.8 L943 386.1 L944 386.1 L944 385.9 L945 385.9 L945 385.8 L946 385.8 L946 386.3 L947 386.3 L947 386.3 L948 386.3 L948 385.8 L949 385.8 L949 380.2 L950 380.2 L950 384.9 L951 384.9 L951 385.2 L952 385.2 L952 389.3 L953 389.3 L953 388.6 L954 388.6 L954 389.0 L955 389.0 L955 388.7 L956 388.7 L956 388.9 L957 388.9 L957 372.5 L958 372.5 L958 388.0 L959 388.0 L959 388.4 L960 388.4 L960 390.1 L961 390.1 L961 390.6 L962 390.6 L962 390.6 L963 390.6 L963 387.2 L964 387.2 L964 388.3 L965 388.3 L965 388.2 L966 388.2 L966 388.0 L967 388.0 L967 386.6 L968 386.6 L968 387.6 L969 387.6 L969 388.6 L970 388.6 L970 388.6 L971 388.6 L971 387.1 L972 387.1 L972 387.6 L973 387.6 L973 388.5 L974 388.5 L974 384.0 L975 384.0 L975 388.0 L976 388.0 L976 384.5 L977 384.5 L977 387.7 L978 387.7 L978 386.8 L979 386.8 L979 387.6 L980 387.6 L980 386.7 L981 386.7 L981 388.3 L982 388.3 L982 386.5 L983 386.5 L983 387.5 L984 387.5 L984 386.3 L985 386.3 L985 386.3 L986 386.3 L986 387.0 L987 387.0 L987 386.1 L988 386.1 L988 386.0 L989 386.0 L989 384.5 L990 384.5 L990 391.0 L991 391.0 L991 390.5 L992 390.5 L992 390.3 L993 390.3 L993 388.4 L994 388.4 L994 389.8 L995 389.8 L995 390.5 L996 390.5 L996 389.8 L997 389.8 L997 389.2 L998 389.2 L998 384.2 L999 384.2 L999 385.0 L1000 385.0 L1000 389.8 L1001 389.8 L1001 385.5 L1002 385.5 L1002 388.8 L1003 388.8 L1003 385.5 L1004 385.5 L1004 389.3 L1005 389.3 L1005 387.9 L1006 387.9 L1006 386.7 L1007 386.7 L1007 386.9 L1008 386.9 L1008 388.0 L1009 388.0 L1009 387.1 L1010 387.1 L1010 386.7 L1011 386.7 L1011 387.8 L1012 387.8 L1012 388.4 L1013 388.4 L1013 388.2 L1014 388.2 L1014 383.7 L1015 383.7 L1015 391.1 L1016 391.1 L1016 390.8 L1017 390.8 L1017 390.1 L1018 390.1 L1018 390.6 L1019 390.6 L1019 389.5 L1020 389.5 L1020 383.1 L1021 383.1 L1021 387.3 L1022 387.3 L1022 389.3 L1023 389.3 L1023 388.2 L1024 388.2 L1024 388.4 L1025 388.4 L1025 388.6 L1026 388.6 L1026 388.6 L1027 388.6 L1027 389.3 L1028 389.3 L1028 387.8 L1029 387.8 L1029 386.8 L1030 386.8 L1030 386.6 L1031 386.6 L1031 388.5 L1032 388.5 L1032 386.7 L1033 386.7 L1033 386.2 L1034 386.2 L1034 419.0 L1033 419.0 L1033 419.0 L1032 419.0 L1032 419.0 L1031 419.0 L1031 419.0 L1030 419.0 L1030 419.0 L1029 419.0 L1029 419.0 L1028 419.0 L1028 419.0 L1027 419.0 L1027 419.0 L1026 419.0 L1026 419.0 L1025 419.0 L1025 419.0 L1024 419.0 L1024 419.0 L1023 419.0 L1023 419.0 L1022 419.0 L1022 419.0 L1021 419.0 L1021 419.0 L1020 419.0 L1020 419.0 L1019 419.0 L1019 419.0 L1018 419.0 L1018 419.0 L1017 419.0 L1017 419.0 L1016 419.0 L1016 419.0 L1015 419.0 L1015 419.0 L1014 419.0 L1014 419.0 L1013 419.0 L1013 419.0 L1012 419.0 L1012 419.0 L1011 419.0 L1011 419.0 L1010 419.0 L1010 419.0 L1009 419.0 L1009 419.0 L1008 419.0 L1008 419.0 L1007 419.0 L1007 419.0 L1006 419.0 L1006 419.0 L1005 419.0 L1005 419.0 L1004 419.0 L1004 419.0 L1003 419.0 L1003 419.0 L1002 419.0 L1002 419.0 L1001 419.0 L1001 419.0 L1000 419.0 L1000 419.0 L999 419.0 L999 419.0 L998 419.0 L998 419.0 L997 419.0 L997 419.0 L996 419.0 L996 419.0 L995 419.0 L995 419.0 L994 419.0 L994 419.0 L993 419.0 L993 419.0 L992 419.0 L992 419.0 L991 419.0 L991 419.0 L990 419.0 L990 419.0 L989 419.0 L989 419.0 L988 419.0 L988 419.0 L987 419.0 L987 419.0 L986 419.0 L986 419.0 L985 419.0 L985 419.0 L984 419.0 L984 419.0 L983 419.0 L983 419.0 L982 419.0 L982 419.0 L981 419.0 L981 419.0 L980 419.0 L980 419.0 L979 419.0 L979 419.0 L978 419.0 L978 419.0 L977 419.0 L977 419.0 L976 419.0 L976 419.0 L975 419.0 L975 419.0 L974 419.0 L974 419.0 L973 419.0 L973 419.0 L972 419.0 L972 419.0 L971 419.0 L971 419.0 L970 419.0 L970 419.0 L969 419.0 L969 419.0 L968 419.0 L968 419.0 L967 419.0 L967 419.0 L966 419.0 L966 419.0 L965 419.0 L965 419.0 L964 419.0 L964 419.0 L963 419.0 L963 419.0 L962 419.0 L962 419.0 L961 419.0 L961 419.0 L960 419.0 L960 419.0 L959 419.0 L959 419.0 L958 419.0 L958 419.0 L957 419.0 L957 419.0 L956 419.0 L956 419.0 L955 419.0 L955 419.0 L954 419.0 L954 419.0 L953 419.0 L953 419.0 L952 419.0 L952 419.0 L951 419.0 L951 419.0 L950 419.0 L950 419.0 L949 419.0 L949 419.0 L948 419.0 L948 419.0 L947 419.0 L947 419.0 L946 419.0 L946 419.0 L945 419.0 L945 419.0 L944 419.0 L944 419.0 L943 419.0 L943 419.0 L942 419.0 L942 419.0 L941 419.0 L941 419.0 L940 419.0 L940 419.0 L939 419.0 L939 419.0 L938 419.0 L938 419.0 L937 419.0 L937 419.0 L936 419.0 L936 419.0 L935 419.0 L935 419.0 L934 419.0 L934 419.0 L933 419.0 L933 419.0 L932 419.0 L932 419.0 L931 419.0 L931 419.0 L930 419.0 L930 419.0 L929 419.0 L929 419.0 L928 419.0 L928 419.0 L927 419.0 L927 419.0 L926 419.0 L926 419.0 L925 419.0 L925 419.0 L924 419.0 L924 419.0 L923 419.0 L923 419.0 L922 419.0 L922 419.0 L921 419.0 L921 419.0 L920 419.0 L920 419.0 L919 419.0 L919 419.0 L918 419.0 L918 419.0 L917 419.0 L917 419.0 L916 419.0 L916 419.0 L915 419.0 L915 419.0 L914 419.0 L914 419.0 L913 419.0 L913 419.0 L912 419.0 L912 419.0 L911 419.0 L911 419.0 L910 419.0 L910 419.0 L909 419.0 L909 419.0 L908 419.0 L908 419.0 L907 419.0 L907 419.0 L906 419.0 L906 419.0 L905 419.0 L905 419.0 L904 419.0 L904 419.0 L903 419.0 L903 419.0 L902 419.0 L902 419.0 L901 419.0 L901 419.0 L900 419.0 L900 419.0 L899 419.0 L899 419.0 L898 419.0 L898 419.0 L897 419.0 L897 419.0 L896 419.0 L896 419.0 L895 419.0 L895 419.0 L894 419.0 L894 419.0 L893 419.0 L893 419.0 L892 419.0 L892 419.0 L891 419.0 L891 419.0 L890 419.0 L890 419.0 L889 419.0 L889 419.0 L888 419.0 L888 419.0 L887 419.0 L887 419.0 L886 419.0 L886 419.0 L885 419.0 L885 419.0 L884 419.0 L884 419.0 L883 419.0 L883 419.0 L882 419.0 L882 419.0 L881 419.0 L881 419.0 L880 419.0 L880 419.0 L879 419.0 L879 419.0 L878 419.0 L878 419.0 L877 419.0 L877 419.0 L876 419.0 L876 419.0 L875 419.0 L875 419.0 L874 419.0 L874 419.0 L873 419.0 L873 419.0 L872 419.0 L872 419.0 L871 419.0 L871 419.0 L870 419.0 L870 419.0 L869 419.0 L869 419.0 L868 419.0 L868 419.0 L867 419.0 L867 419.0 L866 419.0 L866 419.0 L865 419.0 L865 419.0 L864 419.0 L864 419.0 L863 419.0 L863 419.0 L862 419.0 L862 419.0 L861 419.0 L861 419.0 L860 419.0 L860 419.0 L859 419.0 L859 419.0 L858 419.0 L858 419.0 L857 419.0 L857 419.0 L856 419.0 L856 419.0 L855 419.0 L855 419.0 L854 419.0 L854 419.0 L853 419.0 L853 419.0 L852 419.0 L852 419.0 L851 419.0 L851 419.0 L850 419.0 L850 419.0 L849 419.0 L849 419.0 L848 419.0 L848 419.0 L847 419.0 L847 419.0 L846 419.0 L846 419.0 L845 419.0 L845 419.0 L844 419.0 L844 419.0 L843 419.0 L843 419.0 L842 419.0 L842 419.0 L841 419.0 L841 419.0 L840 419.0 L840 419.0 L839 419.0 L839 419.0 L838 419.0 L838 419.0 L837 419.0 L837 419.0 L836 419.0 L836 419.0 L835 419.0 L835 419.0 L834 419.0 L834 419.0 L833 419.0 L833 419.0 L832 419.0 L832 419.0 L831 419.0 L831 419.0 L830 419.0 L830 419.0 L829 419.0 L829 419.0 L828 419.0 L828 419.0 L827 419.0 L827 419.0 L826 419.0 L826 419.0 L825 419.0 L825 419.0 L824 419.0 L824 419.0 L823 419.0 L823 419.0 L822 419.0 L822 419.0 L821 419.0 L821 419.0 L820 419.0 L820 419.0 L819 419.0 L819 419.0 L818 419.0 L818 419.0 L817 419.0 L817 419.0 L816 419.0 L816 419.0 L815 419.0 L815 419.0 L814 419.0 L814 419.0 L813 419.0 L813 419.0 L812 419.0 L812 419.0 L811 419.0 L811 419.0 L810 419.0 L810 419.0 L809 419.0 L809 419.0 L808 419.0 L808 419.0 L807 419.0 L807 419.0 L806 419.0 L806 419.0 L805 419.0 L805 419.0 L804 419.0 L804 419.0 L803 419.0 L803 419.0 L802 419.0 L802 419.0 L801 419.0 L801 419.0 L800 419.0 L800 419.0 L799 419.0 L799 419.0 L798 419.0 L798 419.0 L797 419.0 L797 419.0 L796 419.0 L796 419.0 L795 419.0 L795 419.0 L794 419.0 L794 419.0 L793 419.0 L793 419.0 L792 419.0 L792 419.0 L791 419.0 L791 419.0 L790 419.0 L790 419.0 L789 419.0 L789 419.0 L788 419.0 L788 419.0 L787 419.0 L787 419.0 L786 419.0 L786 419.0 L785 419.0 L785 419.0 L784 419.0 L784 419.0 L783 419.0 L783 419.0 L782 419.0 L782 419.0 L781 419.0 L781 419.0 L780 419.0 L780 419.0 L779 419.0 L779 419.0 L778 419.0 L778 419.0 L777 419.0 L777 419.0 L776 419.0 L776 419.0 L775 419.0 L775 419.0 L774 419.0 L774 419.0 L773 419.0 L773 419.0 L772 419.0 L772 419.0 L771 419.0 L771 419.0 L770 419.0 L770 419.0 L769 419.0 L769 419.0 L768 419.0 L768 419.0 L767 419.0 L767 419.0 L766 419.0 L766 419.0 L765 419.0 L765 419.0 L764 419.0 L764 419.0 L763 419.0 L763 419.0 L762 419.0 L762 419.0 L761 419.0 L761 419.0 L760 419.0 L760 419.0 L759 419.0 L759 419.0 L758 419.0 L758 419.0 L757 419.0 L757 419.0 L756 419.0 L756 419.0 L755 419.0 L755 419.0 L754 419.0 L754 419.0 L753 419.0 L753 419.0 L752 419.0 L752 419.0 L751 419.0 L751 419.0 L750 419.0 L750 419.0 L749 419.0 L749 419.0 L748 419.0 L748 419.0 L747 419.0 L747 419.0 L746 419.0 L746 419.0 L745 419.0 L745 419.0 L744 419.0 L744 419.0 L743 419.0 L743 419.0 L742 419.0 L742 419.0 L741 419.0 L741 419.0 L740 419.0 L740 419.0 L739 419.0 L739 419.0 L738 419.0 L738 419.0 L737 419.0 L737 419.0 L736 419.0 L736 419.0 L735 419.0 L735 419.0 L734 419.0 L734 419.0 L733 419.0 L733 419.0 L732 419.0 L732 419.0 L731 419.0 L731 419.0 L730 419.0 L730 419.0 L729 419.0 L729 419.0 L728 419.0 L728 419.0 L727 419.0 L727 419.0 L726 419.0 L726 419.0 L725 419.0 L725 419.0 L724 419.0 L724 419.0 L723 419.0 L723 419.0 L722 419.0 L722 419.0 L721 419.0 L721 419.0 L720 419.0 L720 419.0 L719 419.0 L719 419.0 L718 419.0 L718 419.0 L717 419.0 L717 419.0 L716 419.0 L716 419.0 L715 419.0 L715 419.0 L714 419.0 L714 419.0 L713 419.0 L713 419.0 L712 419.0 L712 419.0 L711 419.0 L711 419.0 L710 419.0 L710 419.0 L709 419.0 L709 419.0 L708 419.0 L708 419.0 L707 419.0 L707 419.0 L706 419.0 L706 419.0 L705 419.0 L705 419.0 L704 419.0 L704 419.0 L703 419.0 L703 419.0 L702 419.0 L702 419.0 L701 419.0 L701 419.0 L700 419.0 L700 419.0 L699 419.0 L699 419.0 L698 419.0 L698 419.0 L697 419.0 L697 419.0 L696 419.0 L696 419.0 L695 419.0 L695 419.0 L694 419.0 L694 419.0 L693 419.0 L693 419.0 L692 419.0 L692 419.0 L691 419.0 L691 419.0 L690 419.0 L690 419.0 L689 419.0 L689 419.0 L688 419.0 L688 419.0 L687 419.0 L687 419.0 L686 419.0 L686 419.0 L685 419.0 L685 419.0 L684 419.0 L684 419.0 L683 419.0 L683 419.0 L682 419.0 L682 419.0 L681 419.0 L681 419.0 L680 419.0 L680 419.0 L679 419.0 L679 419.0 L678 419.0 L678 419.0 L677 419.0 L677 419.0 L676 419.0 L676 419.0 L675 419.0 L675 419.0 L674 419.0 L674 419.0 L673 419.0 L673 419.0 L672 419.0 L672 419.0 L671 419.0 L671 419.0 L670 419.0 L670 419.0 L669 419.0 L669 419.0 L668 419.0 L668 419.0 L667 419.0 L667 419.0 L666 419.0 L666 419.0 L665 419.0 L665 419.0 L664 419.0 L664 419.0 L663 419.0 L663 419.0 L662 419.0 L662 419.0 L661 419.0 L661 419.0 L660 419.0 L660 419.0 L659 419.0 L659 419.0 L658 419.0 L658 419.0 L657 419.0 L657 419.0 L656 419.0 L656 419.0 L655 419.0 L655 419.0 L654 419.0 L654 419.0 L653 419.0 L653 419.0 L652 419.0 L652 419.0 L651 419.0 L651 419.0 L650 419.0 L650 419.0 L649 419.0 L649 419.0 L648 419.0 L648 419.0 L647 419.0 L647 419.0 L646 419.0 L646 419.0 L645 419.0 L645 419.0 L644 419.0 L644 419.0 L643 419.0 L643 419.0 L642 419.0 L642 419.0 L641 419.0 L641 419.0 L640 419.0 L640 419.0 L639 419.0 L639 419.0 L638 419.0 L638 419.0 L637 419.0 L637 419.0 L636 419.0 L636 419.0 L635 419.0 L635 419.0 L634 419.0 L634 419.0 L633 419.0 L633 419.0 L632 419.0 L632 419.0 L631 419.0 L631 419.0 L630 419.0 L630 419.0 L629 419.0 L629 419.0 L628 419.0 L628 419.0 L627 419.0 L627 419.0 L626 419.0 L626 412.0 L625 412.0 L625 412.0 L624 412.0 L624 412.0 L623 412.0 L623 412.0 L622 412.0 L622 419.0 L621 419.0 L621 419.0 L620 419.0 L620 419.0 L619 419.0 L619 419.0 L618 419.0 L618 419.0 L617 419.0 L617 419.0 L616 419.0 L616 419.0 L615 419.0 L615 412.0 L614 412.0 L614 412.0 L613 412.0 L613 395.5 L612 395.5 L612 395.5 L611 395.5 L611 395.5 L610 395.5 L610 408.9 L609 408.9 L609 408.9 L608 408.9 L608 379.0 L607 379.0 L607 379.0 L606 379.0 L606 379.0 L605 379.0 L605 375.2 L604 375.2 L604 375.2 L603 375.2 L603 389.3 L602 389.3 L602 389.3 L601 389.3 L601 381.8 L600 381.8 L600 381.8 L599 381.8 L599 404.2 L598 404.2 L598 404.2 L597 404.2 L597 404.2 L596 404.2 L596 413.0 L595 413.0 L595 413.0 L594 413.0 L594 409.6 L593 409.6 L593 409.6 L592 409.6 L592 409.6 L591 409.6 L591 404.2 L590 404.2 L590 404.2 L589 404.2 L589 419.0 L588 419.0 L588 419.0 L587 419.0 L587 416.0 L586 416.0 L586 416.0 L585 416.0 L585 419.0 L584 419.0 L584 419.0 L583 419.0 L583 410.0 L582 410.0 L582 410.0 L581 410.0 L581 419.0 L580 419.0 L580 419.0 L579 419.0 L579 419.0 L578 419.0 L578 419.0 L577 419.0 L577 419.0 L576 419.0 L576 419.0 L575 419.0 L575 419.0 L574 419.0 L574 419.0 L573 419.0 L573 419.0 L572 419.0 L572 419.0 L571 419.0 L571 419.0 L570 419.0 L570 419.0 L569 419.0 L569 419.0 L568 419.0 L568 419.0 L567 419.0 L567 419.0 L566 419.0 L566 419.0 L565 419.0 L565 419.0 L564 419.0 L564 419.0 L563 419.0 L563 419.0 L562 419.0 L562 419.0 L561 419.0 L561 419.0 L560 419.0 L560 419.0 L559 419.0 L559 419.0 L558 419.0 L558 419.0 L557 419.0 L557 419.0 L556 419.0 L556 419.0 L555 419.0 L555 419.0 L554 419.0 L554 419.0 L553 419.0 L553 419.0 L552 419.0 L552 419.0 L551 419.0 L551 419.0 L550 419.0 L550 419.0 L549 419.0 L549 419.0 L548 419.0 L548 419.0 L547 419.0 L547 419.0 L546 419.0 L546 419.0 L545 419.0 L545 419.0 L544 419.0 L544 419.0 L543 419.0 L543 419.0 L542 419.0 L542 419.0 L541 419.0 L541 419.0 L540 419.0 L540 419.0 L539 419.0 L539 419.0 L538 419.0 L538 419.0 L537 419.0 L537 419.0 L536 419.0 L536 419.0 L535 419.0 L535 419.0 L534 419.0 L534 419.0 L533 419.0 L533 419.0 L532 419.0 L532 419.0 L531 419.0 L531 419.0 L530 419.0 L530 419.0 L529 419.0 L529 419.0 L528 419.0 L528 419.0 L527 419.0 L527 419.0 L526 419.0 L526 419.0 L525 419.0 L525 419.0 L524 419.0 L524 419.0 L523 419.0 L523 419.0 L522 419.0 L522 419.0 L521 419.0 L521 419.0 L520 419.0 L520 419.0 L519 419.0 L519 419.0 L518 419.0 L518 419.0 L517 419.0 L517 419.0 L516 419.0 L516 419.0 L515 419.0 L515 419.0 L514 419.0 L514 419.0 L513 419.0 L513 419.0 L512 419.0 L512 419.0 L511 419.0 L511 419.0 L510 419.0 L510 415.0 L509 415.0 L509 415.0 L508 415.0 L508 412.0 L507 412.0 L507 412.0 L506 412.0 L506 412.0 L505 412.0 L505 412.0 L504 412.0 L504 419.0 L503 419.0 L503 419.0 L502 419.0 L502 419.0 L501 419.0 L501 419.0 L500 419.0 L500 419.0 L499 419.0 L499 419.0 L498 419.0 L498 414.0 L497 414.0 L497 414.0 L496 414.0 L496 410.3 L495 410.3 L495 419.0 L494 419.0 L494 419.0 L493 419.0 L493 411.3 L492 411.3 L492 411.3 L491 411.3 L491 389.2 L490 389.2 L490 389.2 L489 389.2 L489 381.4 L488 381.4 L488 381.4 L487 381.4 L487 381.4 L486 381.4 L486 393.0 L485 393.0 L485 393.0 L484 393.0 L484 384.0 L483 384.0 L483 382.8 L482 382.8 L482 382.8 L481 382.8 L481 394.0 L480 394.0 L480 394.0 L479 394.0 L479 404.0 L478 404.0 L478 404.0 L477 404.0 L477 412.8 L476 412.8 L476 412.8 L475 412.8 L475 400.6 L474 400.6 L474 400.6 L473 400.6 L473 419.0 L472 419.0 L472 419.0 L471 419.0 L471 414.5 L470 414.5 L470 414.5 L469 414.5 L469 405.0 L468 405.0 L468 405.0 L467 405.0 L467 415.6 L466 415.6 L466 415.6 L465 415.6 L465 419.0 L464 419.0 L464 419.0 L463 419.0 L463 419.0 L462 419.0 L462 419.0 L461 419.0 L461 419.0 L460 419.0 L460 419.0 L459 419.0 L459 419.0 L458 419.0 L458 419.0 L457 419.0 L457 419.0 L456 419.0 L456 419.0 L455 419.0 L455 419.0 L454 419.0 L454 419.0 L453 419.0 L453 419.0 L452 419.0 L452 419.0 L451 419.0 L451 419.0 L450 419.0 L450 419.0 L449 419.0 L449 419.0 L448 419.0 L448 419.0 L447 419.0 L447 419.0 L446 419.0 L446 419.0 L445 419.0 L445 419.0 L444 419.0 L444 419.0 L443 419.0 L443 419.0 L442 419.0 L442 419.0 L441 419.0 L441 419.0 L440 419.0 L440 419.0 L439 419.0 L439 419.0 L438 419.0 L438 419.0 L437 419.0 L437 419.0 L436 419.0 L436 419.0 L435 419.0 L435 419.0 L434 419.0 L434 419.0 L433 419.0 L433 419.0 L432 419.0 L432 419.0 L431 419.0 L431 419.0 L430 419.0 L430 419.0 L429 419.0 L429 419.0 L428 419.0 L428 419.0 L427 419.0 L427 419.0 L426 419.0 L426 419.0 L425 419.0 L425 419.0 L424 419.0 L424 419.0 L423 419.0 L423 419.0 L422 419.0 L422 419.0 L421 419.0 L421 419.0 L420 419.0 L420 419.0 L419 419.0 L419 419.0 L418 419.0 L418 419.0 L417 419.0 L417 419.0 L416 419.0 L416 419.0 L415 419.0 L415 419.0 L414 419.0 L414 419.0 L413 419.0 L413 419.0 L412 419.0 L412 419.0 L411 419.0 L411 419.0 L410 419.0 L410 419.0 L409 419.0 L409 419.0 L408 419.0 L408 419.0 L407 419.0 L407 419.0 L406 419.0 L406 419.0 L405 419.0 L405 419.0 L404 419.0 L404 419.0 L403 419.0 L403 419.0 L402 419.0 L402 419.0 L401 419.0 L401 419.0 L400 419.0 L400 419.0 L399 419.0 L399 419.0 L398 419.0 L398 419.0 L397 419.0 L397 419.0 L396 419.0 L396 419.0 L395 419.0 L395 419.0 L394 419.0 L394 419.0 L393 419.0 L393 419.0 L392 419.0 L392 419.0 L391 419.0 L391 419.0 L390 419.0 L390 419.0 L389 419.0 L389 419.0 L388 419.0 L388 419.0 L387 419.0 L387 419.0 L386 419.0 L386 419.0 L385 419.0 L385 419.0 L384 419.0 L384 419.0 L383 419.0 L383 419.0 L382 419.0 L382 419.0 L381 419.0 L381 419.0 L380 419.0 L380 419.0 L379 419.0 L379 419.0 L378 419.0 L378 419.0 L377 419.0 L377 419.0 L376 419.0 L376 419.0 L375 419.0 L375 419.0 L374 419.0 L374 419.0 L373 419.0 L373 419.0 L372 419.0 L372 419.0 L371 419.0 L371 419.0 L370 419.0 L370 419.0 L369 419.0 L369 419.0 L368 419.0 L368 419.0 L367 419.0 L367 419.0 L366 419.0 L366 419.0 L365 419.0 L365 419.0 L364 419.0 L364 419.0 L363 419.0 L363 419.0 L362 419.0 L362 419.0 L361 419.0 L361 419.0 L360 419.0 L360 419.0 L359 419.0 L359 419.0 L358 419.0 L358 419.0 L357 419.0 L357 419.0 L356 419.0 L356 419.0 L355 419.0 L355 419.0 L354 419.0 L354 419.0 L353 419.0 L353 419.0 L352 419.0 L352 419.0 L351 419.0 L351 419.0 L350 419.0 L350 419.0 L349 419.0 L349 419.0 L348 419.0 L348 419.0 L347 419.0 L347 419.0 L346 419.0 L346 419.0 L345 419.0 L345 419.0 L344 419.0 L344 419.0 L343 419.0 L343 419.0 L342 419.0 L342 419.0 L341 419.0 L341 419.0 L340 419.0 L340 419.0 L339 419.0 L339 419.0 L338 419.0 L338 419.0 L337 419.0 L337 419.0 L336 419.0 L336 419.0 L335 419.0 L335 419.0 L334 419.0 L334 419.0 L333 419.0 L333 419.0 L332 419.0 L332 419.0 L331 419.0 L331 419.0 L330 419.0 L330 419.0 L329 419.0 L329 419.0 L328 419.0 L328 419.0 L327 419.0 L327 419.0 L326 419.0 L326 419.0 L325 419.0 L325 419.0 L324 419.0 L324 419.0 L323 419.0 L323 419.0 L322 419.0 L322 419.0 L321 419.0 L321 419.0 L320 419.0 L320 419.0 L319 419.0 L319 419.0 L318 419.0 L318 419.0 L317 419.0 L317 419.0 L316 419.0 L316 419.0 L315 419.0 L315 419.0 L314 419.0 L314 419.0 L313 419.0 L313 419.0 L312 419.0 L312 419.0 L311 419.0 L311 419.0 L310 419.0 L310 419.0 L309 419.0 L309 419.0 L308 419.0 L308 419.0 L307 419.0 L307 419.0 L306 419.0 L306 419.0 L305 419.0 L305 419.0 L304 419.0 L304 419.0 L303 419.0 L303 419.0 L302 419.0 L302 419.0 L301 419.0 L301 419.0 L300 419.0 L300 419.0 L299 419.0 L299 419.0 L298 419.0 L298 419.0 L297 419.0 L297 419.0 L296 419.0 L296 419.0 L295 419.0 L295 419.0 L294 419.0 L294 419.0 L293 419.0 L293 419.0 L292 419.0 L292 419.0 L291 419.0 L291 419.0 L290 419.0 L290 419.0 L289 419.0 L289 419.0 L288 419.0 L288 419.0 L287 419.0 L287 419.0 L286 419.0 L286 419.0 L285 419.0 L285 419.0 L284 419.0 L284 419.0 L283 419.0 L283 419.0 L282 419.0 L282 419.0 L281 419.0 L281 419.0 L280 419.0 L280 419.0 L279 419.0 L279 419.0 L278 419.0 L278 419.0 L277 419.0 L277 419.0 L276 419.0 L276 419.0 L275 419.0 L275 419.0 L274 419.0 L274 419.0 L273 419.0 L273 419.0 L272 419.0 L272 419.0 L271 419.0 L271 419.0 L270 419.0 L270 419.0 L269 419.0 L269 419.0 L268 419.0 L268 419.0 L267 419.0 L267 419.0 L266 419.0 L266 419.0 L265 419.0 L265 419.0 L264 419.0 L264 419.0 L263 419.0 L263 419.0 L262 419.0 L262 419.0 L261 419.0 L261 419.0 L260 419.0 L260 419.0 L259 419.0 L259 419.0 L258 419.0 L258 419.0 L257 419.0 L257 419.0 L256 419.0 L256 419.0 L255 419.0 L255 419.0 L254 419.0 L254 419.0 L253 419.0 L253 419.0 L252 419.0 L252 419.0 L251 419.0 L251 419.0 L250 419.0 L250 419.0 L249 419.0 L249 419.0 L248 419.0 L248 419.0 L247 419.0 L247 419.0 L246 419.0 L246 419.0 L245 419.0 L245 419.0 L244 419.0 L244 419.0 L243 419.0 L243 419.0 L242 419.0 L242 419.0 L241 419.0 L241 419.0 L240 419.0 L240 419.0 L239 419.0 L239 419.0 L238 419.0 L238 419.0 L237 419.0 L237 419.0 L236 419.0 L236 419.0 L235 419.0 L235 419.0 L234 419.0 L234 419.0 L233 419.0 L233 419.0 L232 419.0 L232 419.0 L231 419.0 L231 419.0 L230 419.0 L230 419.0 L229 419.0 L229 419.0 L228 419.0 L228 419.0 L227 419.0 L227 419.0 L226 419.0 L226 419.0 L225 419.0 L225 419.0 L224 419.0 L224 419.0 L223 419.0 L223 419.0 L222 419.0 L222 419.0 L221 419.0 L221 419.0 L220 419.0 L220 419.0 L219 419.0 L219 419.0 L218 419.0 L218 419.0 L217 419.0 L217 419.0 L216 419.0 L216 419.0 L215 419.0 L215 419.0 L214 419.0 L214 419.0 L213 419.0 L213 419.0 L212 419.0 L212 419.0 L211 419.0 L211 419.0 L210 419.0 L210 419.0 L209 419.0 L209 419.0 L208 419.0 L208 419.0 L207 419.0 L207 419.0 L206 419.0 L206 419.0 L205 419.0 L205 419.0 L204 419.0 L204 419.0 L203 419.0 L203 419.0 L202 419.0 L202 419.0 L201 419.0 L201 419.0 L200 419.0 L200 419.0 L199 419.0 L199 419.0 L198 419.0 L198 419.0 L197 419.0 L197 419.0 L196 419.0 L196 419.0 L195 419.0 L195 419.0 L194 419.0 L194 419.0 L193 419.0 L193 419.0 L192 419.0 L192 419.0 L191 419.0 L191 419.0 L190 419.0 L190 419.0 L189 419.0 L189 419.0 L188 419.0 L188 419.0 L187 419.0 L187 419.0 L186 419.0 L186 419.0 L185 419.0 L185 419.0 L184 419.0 L184 419.0 L183 419.0 L183 419.0 L182 419.0 L182 419.0 L181 419.0 L181 419.0 L180 419.0 L180 419.0 L179 419.0 L179 419.0 L178 419.0 L178 419.0 L177 419.0 L177 419.0 L176 419.0 L176 419.0 L175 419.0 L175 419.0 L174 419.0 L174 419.0 L173 419.0 L173 419.0 L172 419.0 L172 419.0 L171 419.0 L171 419.0 L170 419.0 L170 419.0 L169 419.0 L169 419.0 L168 419.0 L168 419.0 L167 419.0 L167 419.0 L166 419.0 L166 419.0 L165 419.0 L165 419.0 L164 419.0 L164 419.0 L163 419.0 L163 419.0 L162 419.0 L162 419.0 L161 419.0 L161 419.0 L160 419.0 L160 419.0 L159 419.0 L159 419.0 L158 419.0 L158 419.0 L157 419.0 L157 419.0 L156 419.0 L156 419.0 L155 419.0 L155 419.0 L154 419.0 L154 419.0 L153 419.0 L153 419.0 L152 419.0 L152 419.0 L151 419.0 L151 419.0 L150 419.0 L150 419.0 L149 419.0 L149 419.0 L148 419.0 L148 419.0 L147 419.0 L147 419.0 L146 419.0 L146 419.0 L145 419.0 L145 419.0 L144 419.0 L144 419.0 L143 419.0 L143 419.0 L142 419.0 L142 419.0 L141 419.0 L141 419.0 L140 419.0 L140 419.0 L139 419.0 L139 419.0 L138 419.0 L138 419.0 L137 419.0 L137 419.0 L136 419.0 L136 419.0 L135 419.0 L135 419.0 L134 419.0 L134 419.0 L133 419.0 L133 419.0 L132 419.0 L132 419.0 L131 419.0 L131 419.0 L130 419.0 L130 419.0 L129 419.0 L129 419.0 L128 419.0 L128 419.0 L127 419.0 L127 419.0 L126 419.0 L126 419.0 L125 419.0 L125 419.0 L124 419.0 L124 419.0 L123 419.0 L123 419.0 L122 419.0 L122 419.0 L121 419.0 L121 419.0 L120 419.0 L120 419.0 L119 419.0 L119 419.0 L118 419.0 L118 419.0 L117 419.0 L117 419.0 L116 419.0 L116 419.0 L115 419.0 L115 419.0 L114 419.0 L114 419.0 L113 419.0 L113 419.0 L112 419.0 L112 419.0 L111 419.0 L111 419.0 L110 419.0 L110 419.0 L109 419.0 L109 419.0 L108 419.0 L108 419.0 L107 419.0 L107 419.0 L106 419.0 L106 419.0 L105 419.0 L105 419.0 L104 419.0 L104 419.0 L103 419.0 L103 419.0 L102 419.0 L102 419.0 L101 419.0 L101 419.0 L100 419.0 L100 419.0 L99 419.0 L99 419.0 L98 419.0 L98 419.0 L97 419.0 L97 419.0 L96 419.0 L96 419.0 L95 419.0 L95 419.0 L94 419.0 L94 419.0 L93 419.0 L93 419.0 L92 419.0 L92 419.0 L91 419.0 L91 419.0 L90 419.0 L90 419.0 L89 419.0 L89 419.0 L88 419.0 L88 419.0 L87 419.0 L87 419.0 L86 419.0 L86 419.0 L85 419.0 L85 419.0 L84 419.0 L84 419.0 L83 419.0 L83 419.0 L82 419.0 L82 419.0 L81 419.0 L81 419.0 L80 419.0 L80 419.0 L79 419.0 L79 419.0 L78 419.0 L78 419.0 L77 419.0 L77 419.0 L76 419.0 L76 419.0 L75 419.0 L75 419.0 L74 419.0 L74 419.0 L73 419.0 L73 419.0 L72 419.0 L72 419.0 L71 419.0 L71 419.0 L70 419.0 L70 419.0 L69 419.0 L69 419.0 L68 419.0 L68 419.0 L67 419.0 L67 419.0 L66 419.0 L66 419.0 L65 419.0 L65 419.0 L64 419.0 L64 419.0 L63 419.0 L63 419.0 L62 419.0 L62 419.0 L61 419.0 L61 419.0 L60 419.0 L60 419.0 L59 419.0 L59 419.0 L58 419.0 L58 419.0 L57 419.0 L57 419.0 L56 419.0 L56 419.0 L55 419.0 L55 419.0 L54 419.0 L54 419.0 L53 419.0 L53 419.0 L52 419.0 Z" fill="#ffff00"/><rect x="483" y="190" width="2" height="145" fill="#ffff00"/><rect x="602" y="190" width="2" height="145" fill="#ffff00"/><rect x="248" y="364" width="2" height="34" fill="#ffff00"/><rect x="366" y="347" width="2" height="34" fill="#ffff00"/><rect x="720" y="348" width="2" height="34" fill="#ffff00"/><rect x="838" y="363" width="2" height="34" fill="#ffff00"/><path d="M484.5 163 L491.0 176.5 L484.5 190 L478.0 176.5 Z" fill="none" stroke="#e0e0e0" stroke-width="1.3"/><path d="M603 163 L609.5 176.5 L603 190 L596.5 176.5 Z" fill="none" stroke="#e0e0e0" stroke-width="1.3"/><path d="M366.5 320 L373.0 333.5 L366.5 347 L360.0 333.5 Z" fill="none" stroke="#e0e0e0" stroke-width="1.3"/><path d="M721 320.5 L727.5 334.0 L721 347.5 L714.5 334.0 Z" fill="none" stroke="#e0e0e0" stroke-width="1.3"/><path d="M248.5 336.5 L255.0 350.0 L248.5 363.5 L242.0 350.0 Z" fill="none" stroke="#e0e0e0" stroke-width="1.3"/><rect x="846" y="328" width="22" height="22" fill="#000"/><path d="M839 336 L845.5 349.5 L839 363 L832.5 349.5 Z" fill="#1ee81e" stroke="#1ee81e" stroke-width="1.3"/><path d="M97 423 L101 418 L105 423" fill="none" stroke="#22dd22" stroke-width="1.2"/></svg>
<div class="abs" style="left:495px;top:170px;font-size:25.5px;line-height:22px;color:#f0f020"><span class="o">1</span></div>
<div class="abs" style="left:611px;top:170px;font-size:25.5px;line-height:22px;color:#f0f020">2</div>
<div class="abs" style="left:375px;top:312px;font-size:25.5px;line-height:22px;color:#f0f020">3</div>
<div class="abs" style="left:730px;top:314px;font-size:25.5px;line-height:22px;color:#f0f020">4</div>
<div class="abs" style="left:257px;top:329px;font-size:25.5px;line-height:22px;color:#f0f020">5</div>
<div class="abs" style="left:848px;top:329px;font-size:25.5px;line-height:22px;color:#f0f020">6</div>
<div class="abs b" style="left:5px;top:422px;font-size:18.6px;line-height:22px;color:#fff">Center 4.<span class="ob">1</span>9877 GHz</div>
<div class="abs b" style="left:441px;top:422px;font-size:18.75px;line-height:22px;color:#fff">Video BW <span class="ob">1</span>.0 kHz</div>
<div class="abs b" style="left:895px;top:422px;font-size:18.75px;line-height:22px;color:#fff">Span 20.00 MHz</div>
<div class="abs b" style="left:4px;top:445px;font-size:18.75px;line-height:22px;color:#fff">#Res BW <span class="ob">1</span>.0 kHz</div>
<div class="abs b" style="left:825px;top:445px;font-size:18.1px;line-height:22px;color:#fff">Sweep 24.<span class="ob">1</span> s  (<span class="ob">1</span>00<span class="ob">1</span> pts)</div>
<div class="abs" style="left:0;top:470px;width:3px;height:229px;background:#7a7a7a"></div>
<div class="abs" style="left:0;top:695px;width:1034px;height:4px;background:#7a7a7a"></div>
<div class="abs" style="left:0;top:699px;width:1034px;height:3px;background:#1e1e1e"></div>
<div class="abs" style="left:3px;top:470px;width:210px;height:42px;background:#2e2e2e;border-bottom-right-radius:7px"></div>
<div class="abs" style="left:8.5px;top:480px;font-size:16.8px;line-height:20px;color:#efefef">5 Marker Table</div>
<svg class="abs" style="left:200px;top:485px" width="10" height="12"><path d="M1 1 L9 1 L5 11.2 Z" fill="#f4f4f4"/></svg>
<svg class="abs" style="left:0;top:0" width="1034" height="702"><rect x="54" y="528" width="968" height="22" fill="#2e2e2e"/><rect x="18" y="550" width="36" height="130" fill="#2e2e2e"/><rect x="18" y="527" width="1" height="153" fill="#4a4a4a"/><rect x="54" y="527" width="1" height="153" fill="#4a4a4a"/><rect x="123" y="527" width="1" height="153" fill="#4a4a4a"/><rect x="192" y="527" width="1" height="153" fill="#4a4a4a"/><rect x="261" y="527" width="1" height="153" fill="#4a4a4a"/><rect x="427" y="527" width="1" height="153" fill="#4a4a4a"/><rect x="560" y="527" width="1" height="153" fill="#4a4a4a"/><rect x="688" y="527" width="1" height="153" fill="#4a4a4a"/><rect x="854" y="527" width="1" height="153" fill="#4a4a4a"/><rect x="1022" y="527" width="1" height="153" fill="#4a4a4a"/><rect x="18" y="527" width="1004" height="1" fill="#4a4a4a"/><rect x="18" y="550" width="1004" height="1" fill="#4a4a4a"/><rect x="18" y="572" width="1004" height="1" fill="#4a4a4a"/><rect x="18" y="595" width="1004" height="1" fill="#4a4a4a"/><rect x="18" y="617" width="1004" height="1" fill="#4a4a4a"/><rect x="18" y="639" width="1004" height="1" fill="#4a4a4a"/><rect x="18" y="662" width="1004" height="1" fill="#4a4a4a"/><rect x="18" y="680" width="1004" height="1" fill="#4a4a4a"/><rect x="1012" y="551" width="10" height="63" fill="#a0a0a0"/><rect x="18" y="662.5" width="1004" height="3" fill="#4aaee0"/><rect x="18" y="662.5" width="3" height="18" fill="#4aaee0"/><rect x="1019" y="662.5" width="3" height="18" fill="#4aaee0"/></svg>
<div class="abs" style="left:54px;width:69px;text-align:center;top:528px;font-size:18.5px;line-height:22px;color:#eeeeee">Mode</div>
<div class="abs" style="left:123px;width:69px;text-align:center;top:528px;font-size:18.5px;line-height:22px;color:#eeeeee">Trace</div>
<div class="abs" style="left:192px;width:69px;text-align:center;top:528px;font-size:18.5px;line-height:22px;color:#eeeeee">Scale</div>
<div class="abs" style="left:261px;width:166px;text-align:center;top:528px;font-size:18.5px;line-height:22px;color:#eeeeee">X</div>
<div class="abs" style="left:427px;width:133px;text-align:center;top:528px;font-size:18.5px;line-height:22px;color:#eeeeee">Y</div>
<div class="abs" style="left:560px;width:128px;text-align:center;top:528px;font-size:18.5px;line-height:22px;color:#eeeeee">Function</div>
<div class="abs" style="left:688px;width:166px;text-align:center;top:528px;font-size:18.5px;line-height:22px;color:#eeeeee">Function Width</div>
<div class="abs" style="left:854px;width:168px;text-align:center;top:528px;font-size:18.5px;line-height:22px;color:#eeeeee">Function Value</div>
<div class="abs" style="left:18px;width:30.5px;text-align:right;top:550.5px;font-size:18px;line-height:22px;color:#eeeeee"><span class="o">1</span></div>
<div class="abs" style="left:54px;width:69px;text-align:center;top:550.5px;font-size:18px;line-height:22px;color:#eeeeee">N</div>
<div class="abs" style="left:123px;width:69px;text-align:center;top:550.5px;font-size:18px;line-height:22px;color:#f0f020"><span class="o">1</span></div>
<div class="abs" style="left:192px;width:69px;text-align:center;top:550.5px;font-size:18px;line-height:22px;color:#eeeeee">f</div>
<div class="abs" style="left:261px;width:163px;text-align:right;top:550.5px;font-size:18.5px;line-height:22px;color:#eeeeee">4.<span class="o">1</span>97 57 GHz</div>
<div class="abs" style="left:427px;width:131px;text-align:right;top:550.5px;font-size:18.5px;line-height:22px;color:#eeeeee">-<span class="o">1</span>8.22 dBm</div>
<div class="abs" style="left:18px;width:30.5px;text-align:right;top:572.5px;font-size:18px;line-height:22px;color:#eeeeee">2</div>
<div class="abs" style="left:54px;width:69px;text-align:center;top:572.5px;font-size:18px;line-height:22px;color:#eeeeee">N</div>
<div class="abs" style="left:123px;width:69px;text-align:center;top:572.5px;font-size:18px;line-height:22px;color:#f0f020"><span class="o">1</span></div>
<div class="abs" style="left:192px;width:69px;text-align:center;top:572.5px;font-size:18px;line-height:22px;color:#eeeeee">f</div>
<div class="abs" style="left:261px;width:163px;text-align:right;top:572.5px;font-size:18.5px;line-height:22px;color:#eeeeee">4.<span class="o">1</span>99 97 GHz</div>
<div class="abs" style="left:427px;width:131px;text-align:right;top:572.5px;font-size:18.5px;line-height:22px;color:#eeeeee">-<span class="o">1</span>8.23 dBm</div>
<div class="abs" style="left:18px;width:30.5px;text-align:right;top:595.5px;font-size:18px;line-height:22px;color:#eeeeee">3</div>
<div class="abs" style="left:54px;width:69px;text-align:center;top:595.5px;font-size:18px;line-height:22px;color:#eeeeee">N</div>
<div class="abs" style="left:123px;width:69px;text-align:center;top:595.5px;font-size:18px;line-height:22px;color:#f0f020"><span class="o">1</span></div>
<div class="abs" style="left:192px;width:69px;text-align:center;top:595.5px;font-size:18px;line-height:22px;color:#eeeeee">f</div>
<div class="abs" style="left:261px;width:163px;text-align:right;top:595.5px;font-size:18.5px;line-height:22px;color:#eeeeee">4.<span class="o">1</span>95 <span class="o">1</span>7 GHz</div>
<div class="abs" style="left:427px;width:131px;text-align:right;top:595.5px;font-size:18.5px;line-height:22px;color:#eeeeee">-86.09 dBm</div>
<div class="abs" style="left:18px;width:30.5px;text-align:right;top:617.5px;font-size:18px;line-height:22px;color:#eeeeee">4</div>
<div class="abs" style="left:54px;width:69px;text-align:center;top:617.5px;font-size:18px;line-height:22px;color:#eeeeee">N</div>
<div class="abs" style="left:123px;width:69px;text-align:center;top:617.5px;font-size:18px;line-height:22px;color:#f0f020"><span class="o">1</span></div>
<div class="abs" style="left:192px;width:69px;text-align:center;top:617.5px;font-size:18px;line-height:22px;color:#eeeeee">f</div>
<div class="abs" style="left:261px;width:163px;text-align:right;top:617.5px;font-size:18.5px;line-height:22px;color:#eeeeee">4.202 37 GHz</div>
<div class="abs" style="left:427px;width:131px;text-align:right;top:617.5px;font-size:18.5px;line-height:22px;color:#eeeeee">-86.79 dBm</div>
<div class="abs" style="left:18px;width:30.5px;text-align:right;top:639.5px;font-size:18px;line-height:22px;color:#eeeeee">5</div>
<div class="abs" style="left:54px;width:69px;text-align:center;top:639.5px;font-size:18px;line-height:22px;color:#eeeeee">N</div>
<div class="abs" style="left:123px;width:69px;text-align:center;top:639.5px;font-size:18px;line-height:22px;color:#f0f020"><span class="o">1</span></div>
<div class="abs" style="left:192px;width:69px;text-align:center;top:639.5px;font-size:18px;line-height:22px;color:#eeeeee">f</div>
<div class="abs" style="left:261px;width:163px;text-align:right;top:639.5px;font-size:18.5px;line-height:22px;color:#eeeeee">4.<span class="o">1</span>92 77 GHz</div>
<div class="abs" style="left:427px;width:131px;text-align:right;top:639.5px;font-size:18.5px;line-height:22px;color:#eeeeee">-93.38 dBm</div>
<div class="abs" style="left:18px;width:30.5px;text-align:right;top:662.5px;font-size:18px;line-height:22px;color:#eeeeee">6</div>
<div class="abs" style="left:54px;width:69px;text-align:center;top:662.5px;font-size:18px;line-height:22px;color:#eeeeee">N</div>
<div class="abs" style="left:123px;width:69px;text-align:center;top:662.5px;font-size:18px;line-height:22px;color:#f0f020"><span class="o">1</span></div>
<div class="abs" style="left:192px;width:69px;text-align:center;top:662.5px;font-size:18px;line-height:22px;color:#eeeeee">f</div>
<div class="abs" style="left:261px;width:163px;text-align:right;top:662.5px;font-size:18.5px;line-height:22px;color:#eeeeee">4.204 77 GHz</div>
<div class="abs" style="left:427px;width:131px;text-align:right;top:662.5px;font-size:18.5px;line-height:22px;color:#eeeeee">-92.96 dBm</div>
<div class="abs" style="left:3px;top:681px;width:1031px;height:14px;background:#000"></div>
</div></body></html>
